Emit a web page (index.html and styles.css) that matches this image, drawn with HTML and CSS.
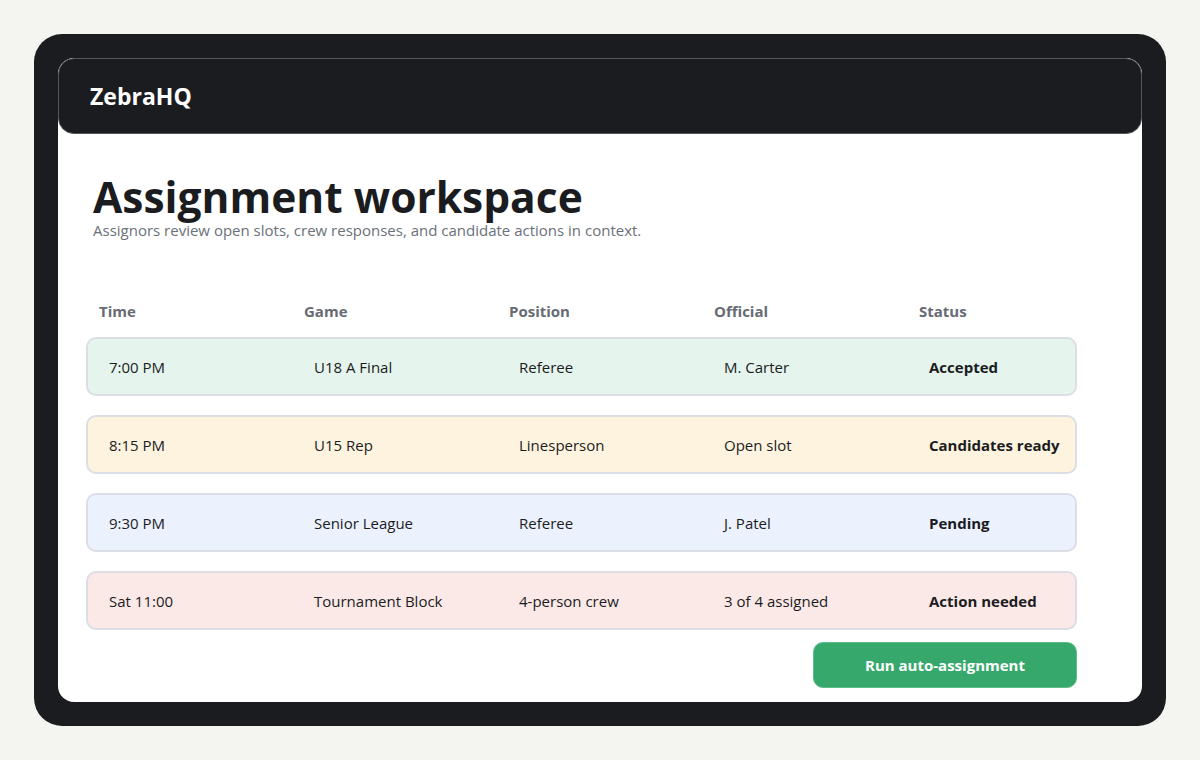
FILE: index.html
```html
<!DOCTYPE html>
<html lang="en">
<head>
    <meta charset="UTF-8">
    <meta name="viewport" content="width=device-width, initial-scale=1.0">
    <title>ZebraHQ - Assignment workspace</title>
    <link rel="stylesheet" href="styles.css">
</head>
<body>

    <div class="device">
        <div class="screen">
            <div class="topbar">
                <span class="brand">ZebraHQ</span>
            </div>

            <div class="content">
                <div class="intro">
                    <h1>Assignment workspace</h1>
                    <p>Assignors review open slots, crew responses, and candidate actions in context.</p>
                </div>

                <div class="table-head">
                    <span>Time</span>
                    <span>Game</span>
                    <span>Position</span>
                    <span>Official</span>
                    <span>Status</span>
                </div>

                <div class="rows">
                    <div class="row accepted">
                        <span>7:00 PM</span>
                        <span>U18 A Final</span>
                        <span>Referee</span>
                        <span>M. Carter</span>
                        <span class="status">Accepted</span>
                    </div>
                    <div class="row ready">
                        <span>8:15 PM</span>
                        <span>U15 Rep</span>
                        <span>Linesperson</span>
                        <span>Open slot</span>
                        <span class="status">Candidates ready</span>
                    </div>
                    <div class="row pending">
                        <span>9:30 PM</span>
                        <span>Senior League</span>
                        <span>Referee</span>
                        <span>J. Patel</span>
                        <span class="status">Pending</span>
                    </div>
                    <div class="row action">
                        <span>Sat 11:00</span>
                        <span>Tournament Block</span>
                        <span>4-person crew</span>
                        <span>3 of 4 assigned</span>
                        <span class="status">Action needed</span>
                    </div>
                </div>

                <div class="actions">
                    <button class="run-btn">Run auto-assignment</button>
                </div>
            </div>
        </div>
    </div>

</body>
</html>
```

FILE: styles.css
```css
body {
    background-color: #f4f4f0;
    margin: 0;
    padding: 34px;
    font-family: "Open Sans", "Noto Sans", sans-serif;
    color: #1b1c1f;
}
.device {
    width: 1132px;
    height: 692px;
    box-sizing: border-box;
    background-color: #1b1c1f;
    border-radius: 28px;
    padding: 24px;
}
.screen {
    background-color: #fff;
    border-radius: 16px;
    height: 644px;
    overflow: hidden;
}
.topbar {
    height: 76px;
    box-sizing: border-box;
    background-color: #1b1c1f;
    border: 1px solid #55565b;
    border-radius: 16px;
    padding: 0 31px;
    display: flex;
    align-items: center;
}
.brand {
    color: #fff;
    font-size: 23px;
    font-weight: 700;
}
.content {
    padding: 0 28px;
}
.intro {
    padding: 39px 0 0 7px;
}
.intro h1 {
    margin: 0;
    font-size: 42.5px;
    line-height: 48px;
    font-weight: 700;
}
.intro p {
    margin: 0;
    font-size: 15px;
    line-height: 18px;
    color: #6b7079;
}
.table-head, .row {
    display: grid;
    grid-template-columns: 205px 205px 205px 205px auto;
    align-items: center;
}
.table-head {
    margin-top: 61px;
    padding: 0 13px;
    height: 22px;
    font-size: 15px;
    font-weight: 700;
    color: #666b74;
}
.rows {
    margin-top: 15px;
    width: 991px;
    display: flex;
    flex-direction: column;
    gap: 19px;
}
.row {
    height: 59px;
    box-sizing: border-box;
    padding: 0 21px;
    border: 2px solid #dcdee6;
    border-radius: 10px;
    font-size: 15px;
    white-space: nowrap;
}
.row .status {
    font-weight: 700;
}
.accepted { background-color: #e5f4ec; }
.ready { background-color: #fdf3de; }
.pending { background-color: #ebf1fd; }
.action { background-color: #fbe9e7; }
.actions {
    width: 991px;
    display: flex;
    justify-content: flex-end;
    margin-top: 12px;
}
.run-btn {
    width: 264px;
    height: 46px;
    background-color: #36a86c;
    color: #fff;
    border: 1px solid #5fbd8a;
    border-radius: 10px;
    font-family: inherit;
    font-size: 15px;
    font-weight: 700;
    cursor: pointer;
}
```
